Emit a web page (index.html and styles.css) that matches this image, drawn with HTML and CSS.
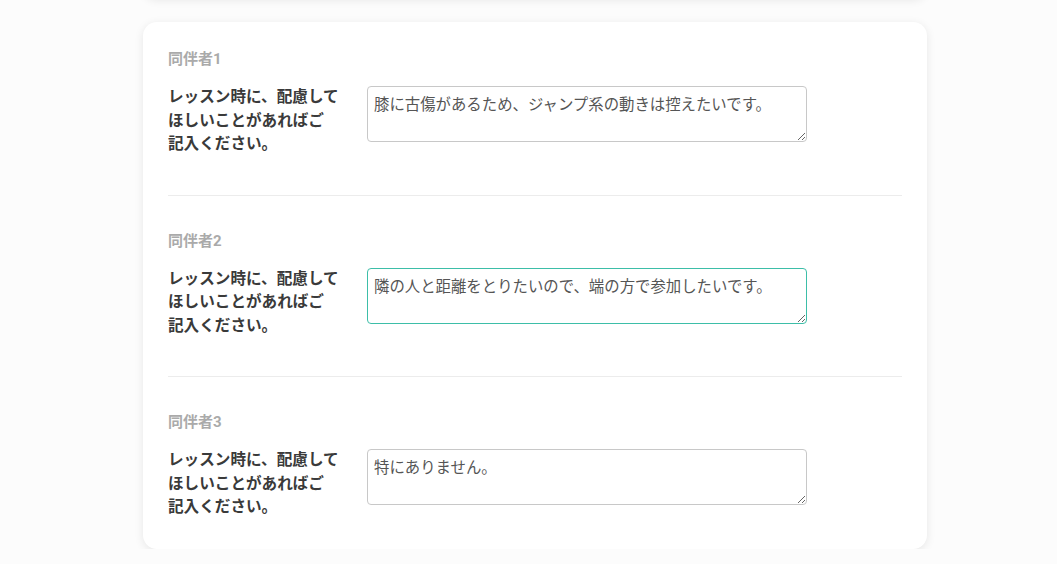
FILE: index.html
```html
<!DOCTYPE html>
<html lang="ja">
<head>
<meta charset="utf-8">
<title>同伴者</title>
<link rel="stylesheet" href="styles.css">
</head>
<body>
<div class="page">
  <div class="card card-prev"></div>
  <div class="card">
    <section class="companion">
      <h3 class="companion-title">同伴者1</h3>
      <div class="field">
        <label class="field-label" for="c1">レッスン時に、配慮して<br>ほしいことがあればご<br>記入ください。</label>
        <textarea id="c1" class="field-input">膝に古傷があるため、ジャンプ系の動きは控えたいです。</textarea>
      </div>
    </section>
    <section class="companion">
      <h3 class="companion-title">同伴者2</h3>
      <div class="field">
        <label class="field-label" for="c2">レッスン時に、配慮して<br>ほしいことがあればご<br>記入ください。</label>
        <textarea id="c2" class="field-input is-focused">隣の人と距離をとりたいので、端の方で参加したいです。</textarea>
      </div>
    </section>
    <section class="companion">
      <h3 class="companion-title">同伴者3</h3>
      <div class="field">
        <label class="field-label" for="c3">レッスン時に、配慮して<br>ほしいことがあればご<br>記入ください。</label>
        <textarea id="c3" class="field-input">特にありません。</textarea>
      </div>
    </section>
  </div>
</div>
</body>
</html>
```

FILE: styles.css
```css
html, body {
  margin: 0;
  padding: 0;
  background: #fcfcfc;
}

body {
  font-family: Roboto, "Noto Sans CJK JP", sans-serif;
  color: #333;
}

.page {
  width: 784px;
  margin-left: 143px;
  display: flex;
  flex-direction: column;
  gap: 24px;
}

.card {
  background: #fff;
  border-radius: 14px;
  box-shadow: 0 2px 10px rgba(0, 0, 0, 0.09);
  padding: 0 25px;
}

.card-prev {
  height: 40px;
  margin-top: -42px;
}

.companion {
  padding: 34px 0 38px;
  border-bottom: 1px solid #ececec;
}

.companion:first-child {
  padding-top: 26px;
}

.companion:last-child {
  border-bottom: none;
  padding-bottom: 29.5px;
}

.companion-title {
  margin: 0 0 16px;
  font-size: 15px;
  line-height: 22px;
  font-weight: 700;
  color: #aaa;
}

.field {
  display: grid;
  grid-template-columns: 180px 440px;
  column-gap: 19px;
  align-items: start;
}

.field-label {
  font-size: 15.6px;
  line-height: 23.5px;
  font-weight: 700;
  color: #3a3a3a;
}

.field-input {
  box-sizing: border-box;
  width: 440px;
  height: 56px;
  margin: 0;
  padding: 7px 6px 5px;
  border: 1px solid #c8c8c8;
  border-radius: 4px;
  font-family: Roboto, "Noto Sans CJK JP", sans-serif;
  font-size: 15.4px;
  line-height: 22px;
  color: #555;
  background: #fff;
  outline: none;
}

.field-input.is-focused {
  border-color: #3dbea8;
}
```
